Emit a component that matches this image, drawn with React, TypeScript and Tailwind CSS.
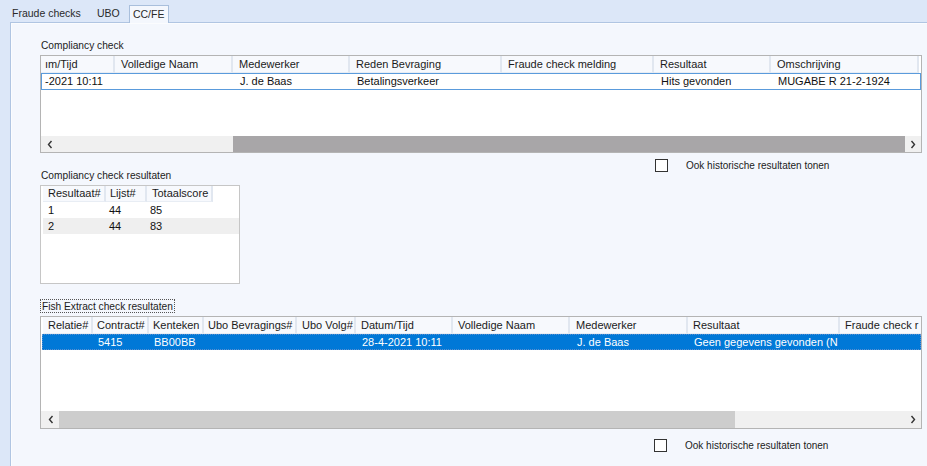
import React from "react";

const font = { fontFamily: '"Liberation Sans", Arial, sans-serif' };

function ChevL() {
  return (
    <svg width="6" height="9" viewBox="0 0 6 9" className="block">
      <path d="M4.5 1 L1.5 4.5 L4.5 8" fill="none" stroke="#333" strokeWidth="1.4" />
    </svg>
  );
}
function ChevR() {
  return (
    <svg width="6" height="9" viewBox="0 0 6 9" className="block">
      <path d="M1.5 1 L4.5 4.5 L1.5 8" fill="none" stroke="#333" strokeWidth="1.4" />
    </svg>
  );
}

type Col = { label: string; w: string; pl: string };

function HeaderRow({ cols, h }: { cols: Col[]; h: string }) {
  return (
    <div className={`flex ${h} shrink-0 overflow-hidden bg-white`}>
      {cols.map((c, i) => (
        <div
          key={i}
          className={`${c.w} ${c.pl} shrink-0 flex items-center whitespace-nowrap overflow-hidden bg-[#f7f9fd] border-r-2 border-b border-r-[#e1e7f0] border-b-[#e8edf4] text-[#1b1b1b]`}
        >
          {c.label}
        </div>
      ))}
    </div>
  );
}

function Checkbox() {
  return (
    <div className="flex items-center h-[13px]">
      <div className="w-[13px] h-[13px] border border-[#333333] bg-white" />
      <span className="ml-[18px] text-[10px] text-[#1b1b1b]">Ook historische resultaten tonen</span>
    </div>
  );
}

const g1Cols: Col[] = [
  { label: "ım/Tijd", w: "w-[74px]", pl: "pl-[4px]" },
  { label: "Volledige Naam", w: "w-[118px]", pl: "pl-[6px]" },
  { label: "Medewerker", w: "w-[117px]", pl: "pl-[6px]" },
  { label: "Reden Bevraging", w: "w-[152px]", pl: "pl-[6px]" },
  { label: "Fraude check melding", w: "w-[152px]", pl: "pl-[6px]" },
  { label: "Resultaat", w: "w-[117px]", pl: "pl-[6px]" },
  { label: "Omschrijving", w: "w-[148px]", pl: "pl-[6px]" },
];
const g1Row = ["-2021 10:11", "", "J. de Baas", "Betalingsverkeer", "", "Hits gevonden", "MUGABE R 21-2-1924"];

const g2Cols: Col[] = [
  { label: "Resultaat#", w: "w-[63px]", pl: "pl-[5px]" },
  { label: "Lijst#", w: "w-[41px]", pl: "pl-[4px]" },
  { label: "Totaalscore", w: "w-[66px]", pl: "pl-[5px]" },
];
const g2Rows = [
  ["1", "44", "85"],
  ["2", "44", "83"],
];

const g3Cols: Col[] = [
  { label: "Relatie#", w: "w-[50px]", pl: "pl-[5px]" },
  { label: "Contract#", w: "w-[56px]", pl: "pl-[4px]" },
  { label: "Kenteken", w: "w-[55px]", pl: "pl-[4px]" },
  { label: "Ubo Bevragings#", w: "w-[93px]", pl: "pl-[4px]" },
  { label: "Ubo Volg#", w: "w-[59px]", pl: "pl-[5px]" },
  { label: "Datum/Tijd", w: "w-[97px]", pl: "pl-[5px]" },
  { label: "Volledige Naam", w: "w-[117px]", pl: "pl-[5px]" },
  { label: "Medewerker", w: "w-[118px]", pl: "pl-[6px]" },
  { label: "Resultaat", w: "w-[152px]", pl: "pl-[5px]" },
  { label: "Fraude check r", w: "w-[90px]", pl: "pl-[5px]" },
];
const g3Row = ["", "5415", "BB00BB", "", "", "28-4-2021 10:11", "", "J. de Baas", "Geen gegevens gevonden (N", ""];

export default function App() {
  return (
    <div
      className="w-[927px] h-[466px] overflow-hidden bg-[#dce7f8] text-[11px] leading-[13px] flex flex-col"
      style={font}
    >
      {/* Tab strip */}
      <div className="h-[22px] flex items-end pl-[6px] shrink-0 text-[10.5px]">
        <div className="h-[17px] px-[6px] flex items-center text-[#2a2a2a]">Fraude checks</div>
        <div className="h-[17px] px-[6px] ml-[4px] flex items-center text-[#2a2a2a]">UBO</div>
        <div className="h-[18px] w-[40px] ml-[3px] flex items-center justify-center bg-[#f4f7fd] border border-b-0 border-[#a9bfdc] text-[#2a2a2a] relative top-[1px]">
          CC/FE
        </div>
      </div>

      {/* Tab page */}
      <div className="ml-[10px] flex-1 border-l border-t border-[#b0c5e2] bg-[#f4f7fd]">
        <div className="h-full border-l border-t border-[#fbfcfe] pl-[28px] pr-[5px] pt-[15px] flex flex-col">
          {/* Compliancy check */}
          <div className="pl-[1px] h-[13px] text-[10.2px] text-[#1b1b1b]">Compliancy check</div>
          <div className="mt-[3px] h-[98px] border border-[#b4b4b4] bg-white flex flex-col">
            <HeaderRow cols={g1Cols} h="h-[17px]" />
            <div className="h-[17px] flex items-center border border-[#5a9bdc] text-[#111]">
              {g1Row.map((t, i) => (
                <div
                  key={i}
                  className={`${g1Cols[i].w} ${i === 0 ? "pl-[3px]" : "pl-[6px]"} shrink-0 whitespace-nowrap overflow-hidden`}
                >
                  {t}
                </div>
              ))}
            </div>
            <div className="flex-1" />
            <div className="h-[16px] flex bg-[#f0f0f0]">
              <div className="w-[16px] flex items-center justify-center ml-[1px]">
                <ChevL />
              </div>
              <div className="w-[175px]" />
              <div className="flex-1 bg-[#a8a6a8]" />
              <div className="w-[16px] flex items-center justify-center">
                <ChevR />
              </div>
            </div>
          </div>

          {/* Middle row */}
          <div className="flex mt-[6px]">
            <div className="flex flex-col pt-[10px]">
              <div className="pl-[1px] h-[13px] text-[10.2px] text-[#1b1b1b]">Compliancy check resultaten</div>
              <div className="mt-[3px] w-[200px] h-[99px] border border-[#c6c6c6] bg-white flex flex-col">
                <div className="pl-[2px] bg-white">
                  <HeaderRow cols={g2Cols} h="h-[16px]" />
                </div>
                {g2Rows.map((r, ri) => (
                  <div
                    key={ri}
                    className={`h-[16px] ml-[2px] flex items-center text-[#111] ${ri === 1 ? "bg-[#efefef]" : "bg-white"}`}
                  >
                    {r.map((t, i) => (
                      <div
                        key={i}
                        className={`${g2Cols[i].w} ${i === 0 ? "pl-[5px]" : "pl-[3px]"} shrink-0`}
                      >
                        {t}
                      </div>
                    ))}
                  </div>
                ))}
              </div>
            </div>
            <div className="ml-[415px]">
              <Checkbox />
            </div>
          </div>

          {/* Fish Extract */}
          <div className="mt-[15px] flex">
            <div className="h-[14px] px-[1px] border border-dotted border-[#555] text-[10.2px] text-[#1b1b1b] flex items-center">
              Fish Extract check resultaten
            </div>
          </div>
          <div className="mt-[3px] h-[113px] border border-[#b4b4b4] bg-white flex flex-col">
            <div className="pl-[2px] bg-white">
              <HeaderRow cols={g3Cols} h="h-[17px]" />
            </div>
            <div className="h-[16px] ml-[1px] flex items-center bg-[#0078d7] text-white border border-dotted border-[#5a8fd0]">
              <div className="w-[1px] shrink-0" />
              {g3Row.map((t, i) => (
                <div
                  key={i}
                  className={`${g3Cols[i].w} ${g3Cols[i].pl} shrink-0 whitespace-nowrap overflow-hidden`}
                >
                  {t}
                </div>
              ))}
            </div>
            <div className="flex-1" />
            <div className="h-[17px] flex bg-[#f0f0f0]">
              <div className="w-[17px] flex items-center justify-center ml-[1px]">
                <ChevL />
              </div>
              <div className="w-[676px] bg-[#cdcdcd]" />
              <div className="flex-1" />
              <div className="w-[16px] flex items-center justify-center">
                <ChevR />
              </div>
            </div>
          </div>
          <div className="mt-[10px] ml-[614px]">
            <Checkbox />
          </div>
        </div>
      </div>
    </div>
  );
}
